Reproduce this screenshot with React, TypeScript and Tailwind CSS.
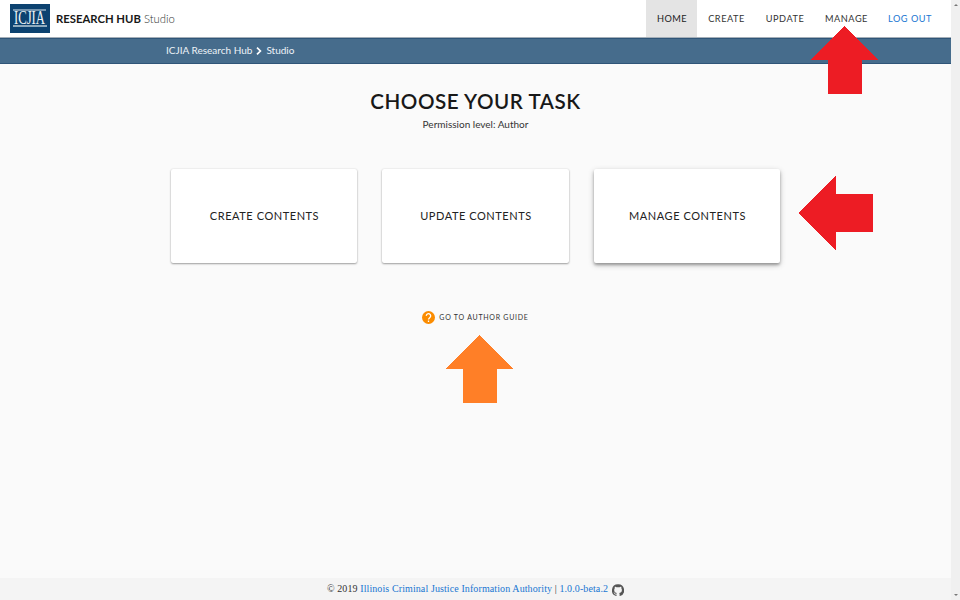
import React from "react";

function Logo() {
  return (
    <svg width="40" height="29" viewBox="0 0 40 29" className="shrink-0 overflow-visible">
      <rect width="40" height="29" fill="#0c4270" />
      <rect x="3" y="5.5" width="33" height="1" fill="#dbe5ed" />
      <rect x="3" y="21" width="34" height="2" fill="#8faabd" />
      <text x="4" y="20" textLength="31" lengthAdjust="spacingAndGlyphs" fontSize="18" fill="#edf2f6" fontFamily="'Liberation Serif', serif">ICJIA</text>
    </svg>
  );
}

const navItems = [
  { label: "HOME", style: "w-[51px] bg-[#e4e4e4] text-[#222]" },
  { label: "CREATE", style: "w-[58px] text-[#333]" },
  { label: "UPDATE", style: "w-[59px] text-[#333]" },
  { label: "MANAGE", style: "w-[64px] text-[#333]" },
  { label: "LOG OUT", style: "w-[63px] text-[#1976d2]" },
];

function Header() {
  return (
    <header className="flex h-[38px] items-center border-b border-[#a5afb8] bg-white pl-[10px] pr-[10px]">
      <Logo />
      <div className="ml-[6px] flex items-baseline gap-[3px] whitespace-nowrap text-[11.3px] leading-4">
        <span className="font-bold text-[#181818]">RESEARCH HUB</span>
        <span className="font-light text-[#333]">Studio</span>
      </div>
      <nav className="ml-auto flex h-full">
        {navItems.map((item) => (
          <a key={item.label} className={`flex h-full items-center justify-center whitespace-nowrap pl-px text-[9.2px] tracking-[0.5px] ${item.style}`}>
            {item.label}
          </a>
        ))}
      </nav>
    </header>
  );
}

function Breadcrumb() {
  return (
    <div className="flex h-[26px] items-center border-y border-[#2f5578] bg-[#466c8c] pb-[2px] pl-[166px] text-[10px] text-[#edf3f8]">
      <span className="whitespace-nowrap">ICJIA Research Hub</span>
      <svg width="6" height="8" viewBox="0 0 6 8" className="ml-[4px] mr-[4px] mt-[2px]" fill="none" stroke="white" strokeWidth="1.7">
        <path d="M1 .7 4.4 4 1 7.3" />
      </svg>
      <span>Studio</span>
    </div>
  );
}

const tasks = [
  { label: "CREATE CONTENTS", shadow: "shadow-[0_1px_2px_rgba(0,0,0,0.35),0_0_2px_rgba(0,0,0,0.12)]" },
  { label: "UPDATE CONTENTS", shadow: "shadow-[0_1px_2px_rgba(0,0,0,0.35),0_0_2px_rgba(0,0,0,0.12)]" },
  { label: "MANAGE CONTENTS", shadow: "shadow-[0_2px_3px_rgba(0,0,0,0.3),0_2px_6px_rgba(0,0,0,0.2)]" },
];

function Main() {
  return (
    <main className="flex grow flex-col items-center">
      <h1 className="mt-[23px] whitespace-nowrap text-[20.6px] font-semibold leading-7 tracking-[0.55px] text-[#181818]">CHOOSE YOUR TASK</h1>
      <p className="mt-[2px] text-[10px] leading-[14px] text-[#333]">Permission level: Author</p>
      <div className="mt-[38px] flex gap-[25px]">
        {tasks.map((task) => (
          <div key={task.label} className={`flex h-[94px] w-[186.5px] items-center justify-center whitespace-nowrap rounded-[2px] bg-white pl-px text-[11px] tracking-[0.55px] text-[#222] ${task.shadow}`}>
            {task.label}
          </div>
        ))}
      </div>
      <div className="mt-[47px] flex items-center gap-[4px]">
        <svg width="13" height="13" viewBox="0 0 24 24">
          <path fill="#fb8c00" d="M12 0a12 12 0 1 0 0 24 12 12 0 0 0 0-24Z" />
          <path d="M8 9a4 4 0 1 1 6.5 3.1C13 13.3 12 14 12 15.5M12 17.7v2.5" fill="none" stroke="#fff" strokeWidth="2.4" />
        </svg>
        <span className="whitespace-nowrap pt-px text-[7px] leading-[13px] tracking-[0.74px] text-[#333]">GO TO AUTHOR GUIDE</span>
      </div>
    </main>
  );
}

function Footer() {
  return (
    <footer className="flex h-[22px] items-center justify-center bg-[#f4f4f4] font-['Liberation_Serif',serif] text-[10px] text-[#333]">
      <span className="whitespace-nowrap pb-[2px] tracking-[0.1px]">© 2019 <span className="text-[#1976d2]">Illinois Criminal Justice Information Authority</span> | <span className="text-[#1976d2]">1.0.0-beta.2</span></span>
      <svg width="12" height="12" viewBox="0 0 24 24" className="ml-[4px] mt-px" fill="#555">
        <path d="M12 .5a12 12 0 0 0-3.8 23.4c.6.1.8-.3.8-.6v-2.2c-3.3.7-4-1.4-4-1.4-.6-1.4-1.4-1.8-1.4-1.8-1-.7.1-.7.1-.7 1.2.1 1.9 1.2 1.9 1.2 1.1 1.9 2.9 1.3 3.5 1 .1-.8.4-1.3.8-1.6-2.7-.3-5.5-1.3-5.5-5.9 0-1.3.5-2.4 1.2-3.2-.1-.3-.5-1.5.2-3.2 0 0 1-.3 3.3 1.2a11.5 11.5 0 0 1 6 0c2.3-1.5 3.3-1.2 3.3-1.2.7 1.7.3 2.9.2 3.2.7.8 1.2 1.9 1.2 3.2 0 4.6-2.8 5.6-5.5 5.9.5.4.9 1.1.9 2.2v3.3c0 .3.2.7.8.6A12 12 0 0 0 12 .5Z" />
      </svg>
    </footer>
  );
}

function Scrollbar() {
  return (
    <div className="flex w-[9px] flex-col items-center justify-between bg-[#f0f0f0] py-[4px]">
      <svg width="4" height="2" viewBox="0 0 4 2"><path d="M0 2 2 0l2 2Z" fill="#777" /></svg>
      <svg width="4" height="2" viewBox="0 0 4 2"><path d="M0 0h4L2 2Z" fill="#777" /></svg>
    </div>
  );
}

export default function App() {
  return (
    <div className="relative flex h-[600px] w-[960px] overflow-hidden bg-[#fafafa] font-['Lato',sans-serif]">
      <div className="flex w-[951px] flex-col">
        <Header />
        <Breadcrumb />
        <Main />
        <Footer />
      </div>
      <Scrollbar />
      <svg className="absolute left-[811px] top-[26px]" width="68" height="68" shapeRendering="crispEdges">
        <path d="M33.5 0 67.5 34H51V68H17V34H0Z" fill="#ed1c24" />
      </svg>
      <svg className="absolute left-[798px] top-[176px]" width="75" height="74" shapeRendering="crispEdges">
        <path d="M0 37 38 0V18H75V56H38V74Z" fill="#ed1c24" />
      </svg>
      <svg className="absolute left-[446px] top-[335px]" width="68" height="68" shapeRendering="crispEdges">
        <path d="M33.5 0 67.5 34H51V68H17V34H0Z" fill="#ff7f27" />
      </svg>
    </div>
  );
}
